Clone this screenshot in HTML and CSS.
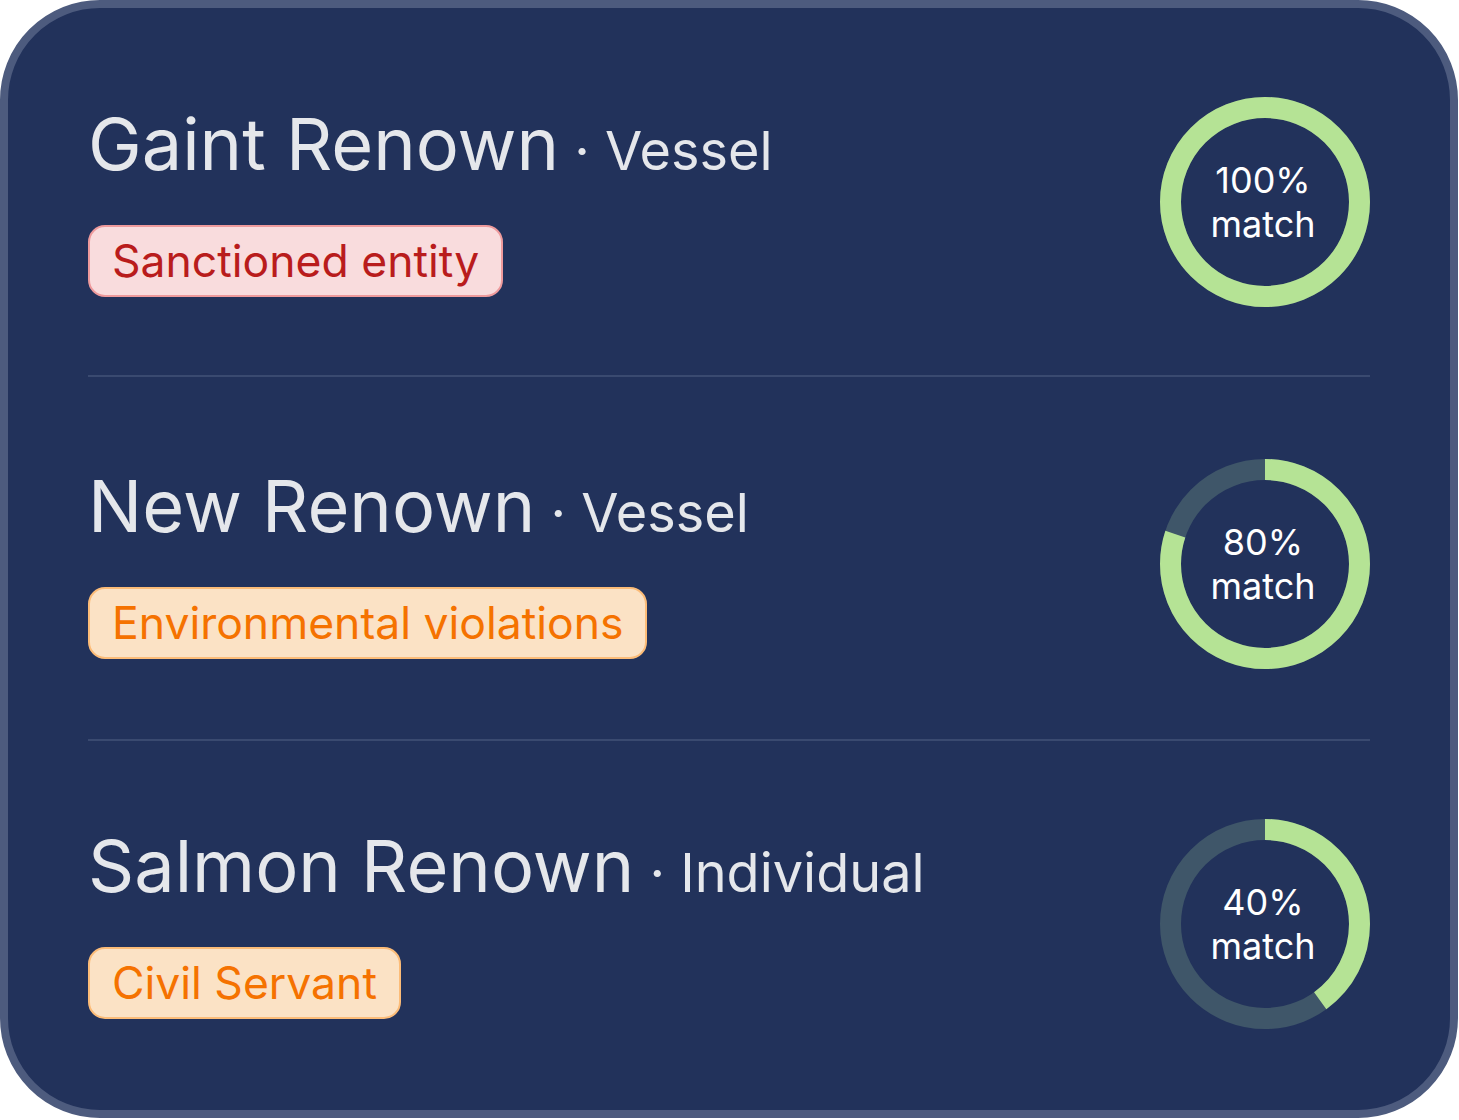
FILE: index.html
```html
<!DOCTYPE html>
<html lang="en">
<head>
<meta charset="utf-8">
<title>Matches</title>
<link rel="stylesheet" href="styles.css">
</head>
<body>
<div class="card">
  <div class="row row-first">
    <div class="info">
      <div class="title"><span class="name">Gaint Renown</span><span class="kind"> · Vessel</span></div>
      <span class="badge badge-red">Sanctioned entity</span>
    </div>
    <div class="ring">
      <svg width="210" height="210" viewBox="0 0 210 210">
        <circle class="track" cx="105" cy="105" r="94.5"/>
        <circle class="bar" cx="105" cy="105" r="94.5" stroke-dasharray="593.76 593.76" transform="rotate(-90 105 105)"/>
      </svg>
      <div class="ring-label">100%<br>match</div>
    </div>
  </div>
  <div class="divider"></div>
  <div class="row row-middle">
    <div class="info">
      <div class="title"><span class="name">New Renown</span><span class="kind"> · Vessel</span></div>
      <span class="badge badge-orange">Environmental violations</span>
    </div>
    <div class="ring">
      <svg width="210" height="210" viewBox="0 0 210 210">
        <circle class="track" cx="105" cy="105" r="94.5"/>
        <circle class="bar" cx="105" cy="105" r="94.5" stroke-dasharray="475.01 593.76" transform="rotate(-90 105 105)"/>
      </svg>
      <div class="ring-label">80%<br>match</div>
    </div>
  </div>
  <div class="divider"></div>
  <div class="row row-last">
    <div class="info">
      <div class="title"><span class="name">Salmon Renown</span><span class="kind"> · Individual</span></div>
      <span class="badge badge-orange">Civil Servant</span>
    </div>
    <div class="ring">
      <svg width="210" height="210" viewBox="0 0 210 210">
        <circle class="track" cx="105" cy="105" r="94.5"/>
        <circle class="bar" cx="105" cy="105" r="94.5" stroke-dasharray="237.5 593.76" transform="rotate(-90 105 105)"/>
      </svg>
      <div class="ring-label">40%<br>match</div>
    </div>
  </div>
</div>
</body>
</html>
```
FILE: styles.css
```css
* { box-sizing: border-box; }
html, body { margin: 0; padding: 0; background: #ffffff; }
body { font-family: Inter, "Noto Sans", sans-serif; }

.card {
  width: 1458px;
  background: #22325b;
  border: 8px solid #4d5b7e;
  border-radius: 100px;
  padding: 9px 80px;
}

.row {
  display: flex;
  align-items: center;
  justify-content: space-between;
  padding: 80px 0 70px;
}
.row-first { padding-bottom: 68px; }
.row-middle { padding-top: 82px; }
.row-last { padding-top: 78px; padding-bottom: 72px; }

.info {
  display: flex;
  flex-direction: column;
  align-items: flex-start;
  gap: 18px;
  margin-top: -6px;
}

.title {
  color: #e5e7eb;
  line-height: 86px;
  white-space: nowrap;
}
.name { font-size: 72px; }
.kind { font-size: 54px; }

.badge {
  display: inline-block;
  font-size: 44.5px;
  line-height: 64px;
  padding: 2px 22px;
  border: 2px solid;
  border-radius: 17px;
}
.badge-red {
  background: #f9dcdd;
  border-color: #ee9a9c;
  color: #b91c1c;
}
.badge-orange {
  background: #fbe2c5;
  border-color: #fcbc78;
  color: #f57200;
}

.divider {
  height: 2px;
  background: #3a4a70;
}

.ring {
  position: relative;
  width: 210px;
  height: 210px;
  flex: none;
}
.ring svg { display: block; }
.track { fill: none; stroke: #3f5669; stroke-width: 21; }
.bar { fill: none; stroke: #b5e395; stroke-width: 21; }
.ring-label {
  position: absolute;
  inset: 0;
  display: flex;
  align-items: center;
  justify-content: center;
  padding-right: 4px;
  text-align: center;
  color: #ffffff;
  font-size: 36px;
  line-height: 44px;
}
```
